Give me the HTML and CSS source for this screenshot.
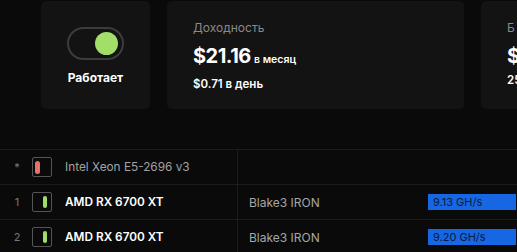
FILE: index.html
```html
<!DOCTYPE html>
<html lang="ru">
<head>
<meta charset="utf-8">
<link rel="stylesheet" href="styles.css">
</head>
<body>
<div class="page">
  <div class="cards">
    <div class="card card-status">
      <div class="toggle"><span class="knob"></span></div>
      <div class="status-label">Работает</div>
    </div>
    <div class="card card-info card-wide">
      <div class="label">Доходность</div>
      <div class="value">$21.16 <span class="unit">в месяц</span></div>
      <div class="sub">$0.71 в день</div>
    </div>
    <div class="card card-info card-wide">
      <div class="label">Б</div>
      <div class="value">$</div>
      <div class="sub">25</div>
    </div>
  </div>

  <div class="table">
    <div class="row">
      <div class="num">*</div>
      <div class="dev"><span class="dev-box off"><span class="pill"></span></span></div>
      <div class="name muted">Intel Xeon E5-2696 v3</div>
      <div class="algo"></div>
      <div class="rate"></div>
    </div>
    <div class="row">
      <div class="num">1</div>
      <div class="dev"><span class="dev-box on"><span class="pill"></span></span></div>
      <div class="name">AMD RX 6700 XT</div>
      <div class="algo">Blake3 IRON</div>
      <div class="rate"><span class="bar">9.13 GH/s</span></div>
    </div>
    <div class="row">
      <div class="num">2</div>
      <div class="dev"><span class="dev-box on"><span class="pill"></span></span></div>
      <div class="name">AMD RX 6700 XT</div>
      <div class="algo">Blake3 IRON</div>
      <div class="rate"><span class="bar">9.20 GH/s</span></div>
    </div>
  </div>
</div>
</body>
</html>
```

FILE: styles.css
```css
html, body {
  margin: 0;
  padding: 0;
  background: #0a0a0a;
  overflow: hidden;
}
body {
  font-family: "Inter", "Liberation Sans", sans-serif;
  color: #ffffff;
  width: 517px;
  height: 252px;
}
.page {
  width: 517px;
}
.cards {
  display: flex;
  gap: 17px;
  padding: 1px 0 0 41px;
  height: 108px;
  white-space: nowrap;
}
.card {
  background: #131313;
  border-radius: 5px;
  flex: none;
  box-sizing: border-box;
  height: 108px;
}
.card-status {
  width: 109px;
  display: flex;
  flex-direction: column;
  align-items: center;
  padding-top: 26px;
}
.toggle {
  width: 57px;
  height: 33px;
  box-sizing: border-box;
  border: 2.5px solid #3c3c3c;
  border-radius: 17px;
  display: flex;
  align-items: center;
  justify-content: flex-end;
  padding-right: 4px;
}
.knob {
  width: 23px;
  height: 23px;
  border-radius: 50%;
  background: #a2df69;
}
.status-label {
  margin-top: 11px;
  font-size: 12px;
  font-weight: 700;
  line-height: 14px;
}
.card-info {
  padding: 20px 0 0 26px;
}
.card-wide {
  width: 297px;
}
.label {
  font-size: 12px;
  line-height: 14px;
  color: #8a8a8a;
}
.value {
  margin-top: 9px;
  font-size: 20px;
  font-weight: 700;
  line-height: 24px;
  letter-spacing: -0.5px;
}
.unit {
  font-size: 10.5px;
  font-weight: 600;
  letter-spacing: 0;
  margin-left: -1px;
}
.sub {
  margin-top: 5px;
  font-size: 11.5px;
  font-weight: 600;
  line-height: 14px;
}
.table {
  margin-top: 40px;
  border-top: 1px solid #1c1c1c;
}
.row {
  display: grid;
  grid-template-columns: 32px 33px 172px 191px 1fr;
  height: 34px;
  align-items: center;
  border-bottom: 1px solid #1c1c1c;
}
.num {
  text-align: center;
  padding-left: 2px;
  font-size: 11px;
  color: #7a7a7a;
}
.dev {
  display: flex;
}
.dev-box {
  width: 20px;
  height: 20px;
  box-sizing: border-box;
  border: 1px solid #555555;
  border-radius: 2px;
  display: flex;
  align-items: center;
  padding: 0 3px 0 2px;
}
.dev-box.off {
  justify-content: flex-start;
}
.dev-box.on {
  justify-content: flex-end;
  padding-right: 4px;
}
.pill {
  border-radius: 3px;
}
.off .pill {
  width: 5px;
  height: 13px;
  background: #e8726b;
}
.on .pill {
  width: 4px;
  height: 12px;
  background: #a1dc6a;
}
.name {
  font-size: 11.8px;
  font-weight: 600;
  color: #ffffff;
}
.name.muted {
  font-weight: 400;
  color: #a2a2a2;
}
.algo {
  align-self: stretch;
  display: flex;
  align-items: center;
  border-left: 1px solid #1c1c1c;
  padding-left: 11px;
  font-size: 12px;
  color: #a6a6a6;
}
.rate {
  display: flex;
}
.bar {
  width: 88px;
  height: 16px;
  box-sizing: border-box;
  background: #1766e3;
  color: #0b1b3c;
  font-size: 11px;
  line-height: 16px;
  padding-left: 5px;
}
```
